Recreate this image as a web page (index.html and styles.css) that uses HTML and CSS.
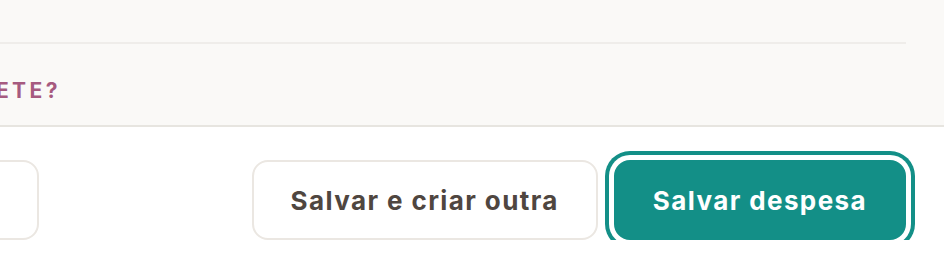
FILE: index.html
```html
<!DOCTYPE html>
<html lang="pt-BR">
<head>
    <meta charset="UTF-8">
    <meta name="viewport" content="width=device-width, initial-scale=1.0">
    <title>Nova despesa</title>
    <link rel="stylesheet" href="styles.css">
</head>
<body>
    <div class="form-body">
        <div class="form-inner">
            <hr class="divider">
            <div class="question">Essa despesa se repete?</div>
        </div>
    </div>

    <div class="form-footer">
        <button type="button" class="btn btn-cancel">Cancelar</button>
        <div class="actions">
            <button type="button" class="btn btn-secondary">Salvar e criar outra</button>
            <button type="submit" class="btn btn-primary">Salvar despesa</button>
        </div>
    </div>
</body>
</html>
```

FILE: styles.css
```css
body {
    margin: 0;
    font-family: Inter, 'Noto Sans', sans-serif;
    background-color: #ffffff;
    overflow: hidden;
}

.form-body {
    background-color: #faf9f7;
    border-bottom: 2px solid #e7e5e0;
    height: 125px;
    overflow: hidden;
}

.form-inner {
    margin-right: 38px;
    padding-top: 42px;
}

.divider {
    margin: 0;
    border: none;
    height: 2px;
    background-color: #efedea;
}

.question {
    margin-top: 34px;
    margin-left: -303px;
    color: #a65a7f;
    font-size: 21px;
    font-weight: 700;
    letter-spacing: 3.4px;
    text-transform: uppercase;
    white-space: nowrap;
}

.form-footer {
    display: flex;
    justify-content: space-between;
    align-items: center;
    padding: 33px 38px 0 0;
}

.actions {
    display: flex;
    gap: 16px;
}

.btn {
    height: 80px;
    padding: 0 37px;
    border-radius: 16px;
    font-family: Inter, 'Noto Sans', sans-serif;
    font-size: 26px;
    font-weight: 700;
    letter-spacing: 1.4px;
    cursor: pointer;
}

.btn-cancel {
    margin-left: -181px;
    width: 220px;
    background: #ffffff;
    border: 2px solid #ebe7e2;
    color: #4f4640;
}

.btn-secondary {
    background: #ffffff;
    border: 2px solid #ebe7e2;
    color: #4f4640;
}

.btn-primary {
    background: #138f87;
    border: 2px solid #138f87;
    color: #ffffff;
    box-shadow: 0 0 0 5px #ffffff, 0 0 0 9px #138f87;
}
```
